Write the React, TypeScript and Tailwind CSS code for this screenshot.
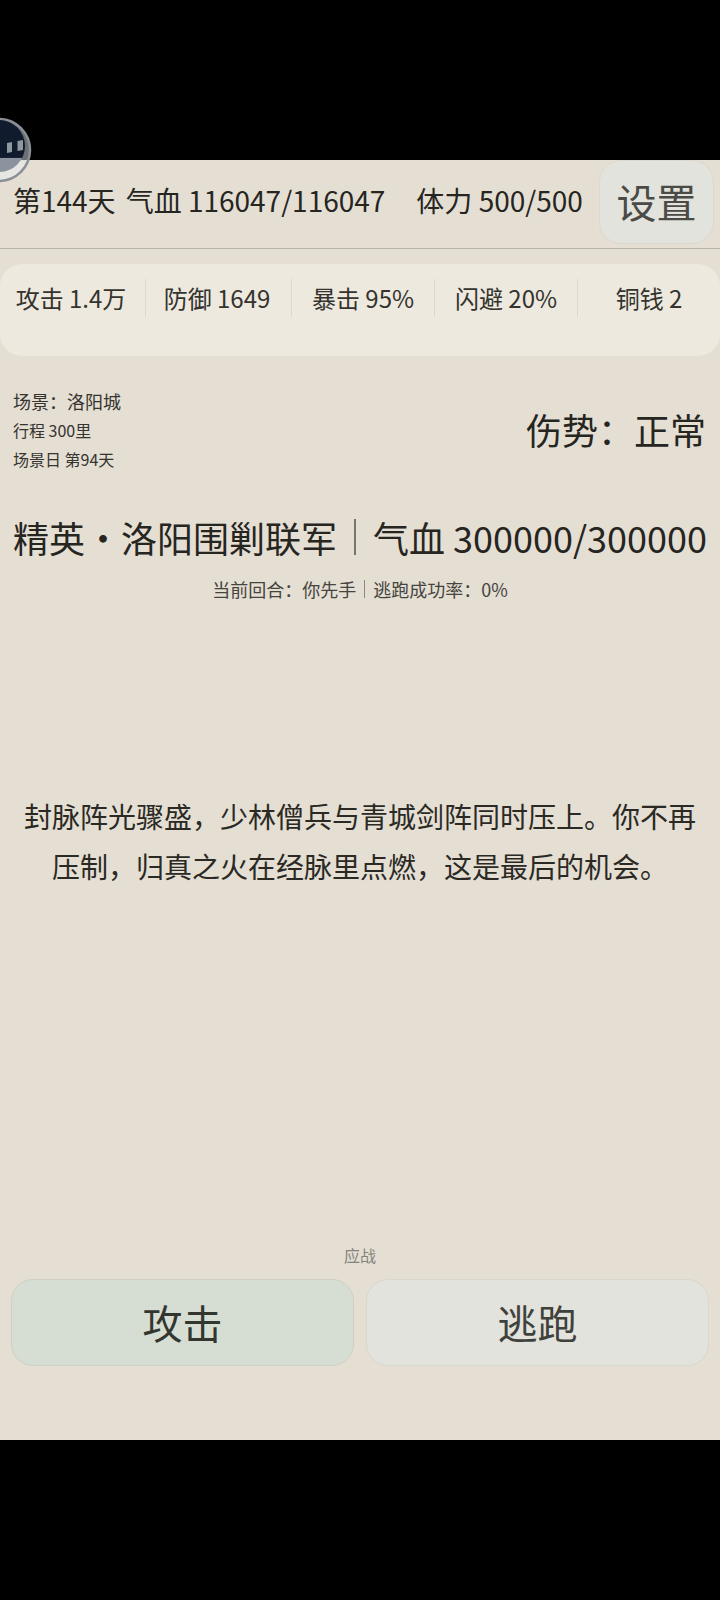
const font = { fontFamily: '"Noto Sans CJK SC", "Noto Sans", sans-serif' };

function Stat({ text, last, shift }: { text: string; last?: boolean; shift?: boolean }) {
  return (
    <div className={`flex h-[38px] flex-1 items-center justify-center whitespace-nowrap ${shift ? 'pr-[3px]' : ''} ${last ? '' : 'border-r border-[#ddd8cc]'}`}>
      {text}
    </div>
  );
}

export default function App() {
  return (
    <div className="relative flex h-[1600px] w-[720px] flex-col overflow-hidden bg-black" style={font}>
      <div className="h-[160px] shrink-0" />
      <main className="flex h-[1280px] flex-col bg-[#e4ded3] text-[#26251f]">
        <header className="flex h-[89px] shrink-0 items-start justify-between border-b border-[#b9b4a9] pl-[13px] pr-[6px]">
          <div className="mt-[20px] flex items-center whitespace-nowrap text-[28px] leading-[40px]">
            <span>第144天</span>
            <span className="ml-[10px]">气血 116047/116047</span>
            <span className="ml-[31px]">体力 500/500</span>
          </div>
          <button className="flex h-[84px] w-[115px] items-center justify-center rounded-[22px] border border-[#dcd9ce] bg-[#e2e3dc] pb-[2px] text-[40px] text-[#4a4b46]">
            设置
          </button>
        </header>

        <section className="mt-[15px] flex h-[92px] shrink-0 items-start rounded-[22px] bg-[#ede9df] pt-[15px] text-[24px] leading-[38px] text-[#34332e]">
          <Stat text="攻击 1.4万" shift />
          <Stat text="防御 1649" shift />
          <Stat text="暴击 95%" />
          <Stat text="闪避 20%" />
          <Stat text="铜钱 2" last />
        </section>

        <section className="mt-[31px] flex shrink-0 items-center justify-between pl-[13px] pr-[14px]">
          <div className="text-[18px] leading-[29px] text-[#35342f]">
            <div>场景：洛阳城</div>
            <div className="text-[16px]">行程 300里</div>
            <div className="text-[16px]">场景日 第94天</div>
          </div>
          <div className="mb-[4px] text-[36px] leading-[50px]">伤势：正常</div>
        </section>

        <div className="mt-[37px] flex shrink-0 items-center justify-center whitespace-nowrap text-[36px] leading-[52px]">
          <span>精英・洛阳围剿联军</span>
          <span className="mx-[17px] h-[36px] w-[2px] bg-[#77756d]" />
          <span>气血 300000/300000</span>
        </div>

        <div className="mt-[12px] flex shrink-0 items-center justify-center text-[18px] leading-[28px] text-[#45443e]">
          <span>当前回合：你先手</span>
          <span className="mx-[8px] h-[18px] w-px bg-[#8a887f]" />
          <span>逃跑成功率：0%</span>
        </div>

        <p className="mt-[188px] shrink-0 px-[14px] text-center text-[28px] leading-[50px] text-[#2a2924]">
          封脉阵光骤盛，少林僧兵与青城剑阵同时压上。你不再压制，归真之火在经脉里点燃，这是最后的机会。
        </p>

        <div className="mt-[352px] shrink-0 text-center text-[16px] leading-[24px] text-[#85847b]">应战</div>

        <div className="mt-[12px] flex shrink-0 gap-[12px] px-[11px]">
          <button className="flex h-[87px] flex-1 items-center justify-center rounded-[22px] border border-[#cfd0c3] bg-[#d6ded3] pb-[2px] text-[40px] text-[#33362f]">
            攻击
          </button>
          <button className="flex h-[87px] flex-1 items-center justify-center rounded-[22px] border border-[#d9d8cc] bg-[#e2e3dc] pb-[2px] text-[40px] text-[#3f413b]">
            逃跑
          </button>
        </div>
      </main>
      <div className="h-[160px] shrink-0" />

      <svg className="absolute left-0 top-[117px]" width="32" height="66" viewBox="0 0 32 66">
        <defs>
          <linearGradient id="band" x1="0" y1="0" x2="0" y2="1">
            <stop offset="0" stopColor="#6c7074" />
            <stop offset="0.66" stopColor="#6c7074" />
            <stop offset="0.67" stopColor="#e6e6e3" />
            <stop offset="1" stopColor="#e6e6e3" />
          </linearGradient>
          <linearGradient id="face" x1="0" y1="0" x2="0" y2="1">
            <stop offset="0" stopColor="#101b2d" />
            <stop offset="0.72" stopColor="#101b2d" />
            <stop offset="0.74" stopColor="#8b939e" />
            <stop offset="1" stopColor="#8b939e" />
          </linearGradient>
        </defs>
        <circle cx="-1" cy="33" r="31" fill="url(#band)" stroke="#8a9096" strokeWidth="2.5" />
        <circle cx="-1" cy="29" r="26" fill="url(#face)" />
        <path d="M7 26 L12 25 L12 35 L7 36 Z" fill="#8f979f" />
        <path d="M17.5 24 L23 23 L23 33 L17.5 34 Z" fill="#8f979f" />
      </svg>
    </div>
  );
}
